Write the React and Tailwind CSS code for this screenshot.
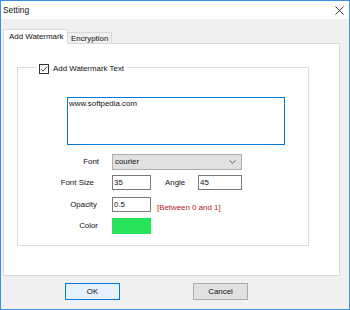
export default function App() {
  const ui = { fontFamily: '"Liberation Sans", Arial, sans-serif' };

  return (
    <div
      className="w-[350px] h-[310px] border border-[#3b8fdc] bg-[#f0f0f0] flex flex-col text-[7.9px] text-[#111] leading-none"
      style={ui}
    >
      {/* Title bar */}
      <div className="h-[18px] bg-white flex items-center justify-between pl-[2px] pr-[5px]">
        <span className="text-[8.4px]">Setting</span>
        <svg width="9" height="9" viewBox="0 0 9 9" className="mt-px">
          <path d="M0.5 0.5 L8.5 8.5 M8.5 0.5 L0.5 8.5" stroke="#222" strokeWidth="0.9" />
        </svg>
      </div>

      {/* Body */}
      <div className="flex flex-col pt-[10px] pl-[2px]">
        {/* Tabs */}
        <div className="flex items-end h-[14px]">
          <div className="relative z-10 -mb-px w-[65px] h-[15px] bg-white border border-b-0 border-[#d9d9d9] flex items-center pl-[5px]">
            Add Watermark
          </div>
          <div className="w-[44px] h-[11px] bg-[#f0f0f0] border border-b-0 border-l-0 border-[#d9d9d9] flex items-center pl-[3px] pt-px">
            Encryption
          </div>
        </div>

        {/* Panel */}
        <div className="w-[337px] h-[233px] bg-white border border-[#d9d9d9] pl-[13px] pt-[23px]">
          {/* Group box */}
          <div className="relative w-[292px] h-[179px] border border-[#dcdcdc] flex flex-col">
            <div className="absolute left-[19px] -top-[5px] h-[11px] bg-white px-[2px] flex items-center gap-[4px] pr-[3px]">
              <div className="w-[10px] h-[10px] border border-[#333] bg-white flex items-center justify-center">
                <svg width="8" height="8" viewBox="0 0 8 8">
                  <path d="M1 4.2 L3 6.2 L7 1.6" fill="none" stroke="#222" strokeWidth="0.9" />
                </svg>
              </div>
              <span>Add Watermark Text</span>
            </div>

            {/* Text area */}
            <div className="ml-[49px] mt-[29px] w-[218px] h-[48px] border border-[#0078d7] pl-px pt-[2px]">
              www.softpedia.com
            </div>

            {/* Font */}
            <div className="flex items-center mt-[9px] h-[16px]">
              <div className="w-[81px] text-right">Font</div>
              <div className="ml-[13px] w-[130px] h-[16px] bg-[#e1e1e1] border border-[#adadad] flex items-center justify-between pl-[2px] pr-[5px]">
                <span>courier</span>
                <svg width="7" height="4" viewBox="0 0 7 4">
                  <path d="M0.5 0.5 L3.5 3.3 L6.5 0.5" fill="none" stroke="#555" strokeWidth="0.9" />
                </svg>
              </div>
            </div>

            {/* Font size / Angle */}
            <div className="flex items-center mt-[5px] h-[15px]">
              <div className="w-[81px] text-right pr-[5px]">Font Size</div>
              <div className="ml-[13px] w-[39px] h-[15px] border border-[#7a7a7a] flex items-center pl-px">35</div>
              <div className="ml-[14px] w-[33px]">Angle</div>
              <div className="w-[44px] h-[15px] border border-[#7a7a7a] flex items-center pl-px">45</div>
            </div>

            {/* Opacity */}
            <div className="flex items-center mt-[7px] h-[15px]">
              <div className="w-[81px] text-right pr-[2px]">Opacity</div>
              <div className="ml-[13px] w-[39px] h-[15px] border border-[#7a7a7a] flex items-center pl-px">0.5</div>
              <div className="ml-[6px] pt-[6px] text-[#b3202a]">[Between 0 and 1]</div>
            </div>

            {/* Color */}
            <div className="flex items-center mt-[6px] h-[16px]">
              <div className="w-[81px] text-right pr-px">Color</div>
              <div className="ml-[13px] w-[39px] h-[16px] bg-[#27e35a]" />
            </div>
          </div>
        </div>
      </div>

      {/* Buttons */}
      <div className="flex mt-[7px] pl-[64px] gap-[73px]">
        <div className="w-[55px] h-[17px] bg-[#e5f1fb] border border-[#0078d7] flex items-center justify-center">
          OK
        </div>
        <div className="w-[55px] h-[17px] bg-[#e1e1e1] border border-[#adadad] flex items-center justify-center">
          Cancel
        </div>
      </div>
    </div>
  );
}
